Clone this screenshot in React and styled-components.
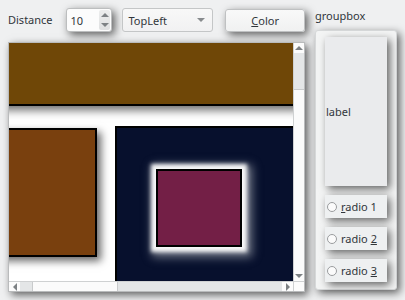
import styled, { createGlobalStyle } from 'styled-components';

const Global = createGlobalStyle`
  html, body {
    margin: 0;
    padding: 0;
    background: #eff0f1;
  }
  body {
    font-family: "Noto Sans", "DejaVu Sans", sans-serif;
    font-size: 11px;
    color: #31363b;
  }
`;

const shadow = '3px 3px 8px rgba(0,0,0,0.6)';

const Page = styled.div`
  display: flex;
  gap: 10px;
  padding: 8px 8px 0 8px;
  width: 405px;
  height: 300px;
  box-sizing: border-box;
  overflow: hidden;
`;
const LeftCol = styled.div`
  width: 297px;
  display: flex;
  flex-direction: column;
  gap: 10px;
`;
const Toolbar = styled.div`
  display: flex;
  align-items: center;
  height: 24px;
`;
const Caption = styled.span`
  margin-right: 13px;
  line-height: 24px;
`;
const Spin = styled.div`
  width: 47px;
  height: 24px;
  box-sizing: border-box;
  margin-right: 10px;
  background: #fcfcfc;
  border: 1px solid #bcbebf;
  border-radius: 3px;
  box-shadow: ${shadow};
  display: flex;
  align-items: center;
  justify-content: space-between;
  padding-left: 4px;
`;
const SpinArrows = styled.div`
  width: 11px;
  height: 20px;
  margin-right: 1px;
  border-radius: 2px;
  background: linear-gradient(#eceded, #dfe0e1);
  display: flex;
  flex-direction: column;
  align-items: center;
  justify-content: space-around;
`;
const Tri = styled.div`
  width: 0;
  height: 0;
  border-left: ${p => p.$size || 4}px solid transparent;
  border-right: ${p => p.$size || 4}px solid transparent;
  ${p => (p.$up ? 'border-bottom' : 'border-top')}: ${p => p.$size || 4}px solid ${p => p.$color || '#7d8184'};
`;
const SideTri = styled.div`
  width: 0;
  height: 0;
  border-top: 4px solid transparent;
  border-bottom: 4px solid transparent;
  ${p => (p.$left ? 'border-right' : 'border-left')}: 4px solid #7d8184;
`;
const Combo = styled.div`
  width: 91px;
  height: 24px;
  box-sizing: border-box;
  margin-right: 12px;
  background: linear-gradient(#f8f8f8, #f1f1f2);
  border: 1px solid #c4c6c7;
  border-radius: 3px;
  display: flex;
  align-items: center;
  justify-content: space-between;
  padding: 0 7px 0 5px;
`;
const Button = styled.div`
  width: 80px;
  height: 23px;
  box-sizing: border-box;
  background: linear-gradient(#f9f9f9, #f0f1f1);
  border: 1px solid #bfc1c2;
  border-radius: 3px;
  box-shadow: ${shadow};
  display: flex;
  align-items: center;
  justify-content: center;
`;
const U = styled.span`
  text-decoration: underline;
`;
const ScrollArea = styled.div`
  height: 250px;
  box-sizing: border-box;
  border: 1px solid #b9bbbc;
  background: #fff;
  box-shadow: ${shadow};
  display: grid;
  grid-template-columns: 1fr 11px;
  grid-template-rows: 1fr 10px;
`;
const Viewport = styled.div`
  position: relative;
  overflow: hidden;
  background: #fff;
`;
const Item = styled.div`
  position: absolute;
  box-sizing: border-box;
  border: 2px solid #000;
  background: ${p => p.$bg};
`;
const TopBar = styled(Item)`
  left: -20px;
  top: -20px;
  width: 340px;
  height: 83px;
  box-shadow: 3px 4px 9px rgba(0,0,0,0.6);
`;
const LeftBox = styled(Item)`
  left: -20px;
  top: 85px;
  width: 108px;
  height: 129px;
  box-shadow: 4px 4px 8px rgba(0,0,0,0.6);
`;
const NavyBox = styled(Item)`
  left: 106px;
  top: 83px;
  width: 220px;
  height: 200px;
`;
const InnerBox = styled(Item)`
  left: 147px;
  top: 126px;
  width: 86px;
  height: 78px;
  box-shadow: 0 0 4px 5px rgba(255,255,255,0.95), 3px 3px 9px 7px rgba(150,155,165,0.75);
`;
const VBar = styled.div`
  border-left: 1px solid #cfd1d2;
  background: #fff;
  display: flex;
  flex-direction: column;
`;
const HBar = styled.div`
  border-top: 1px solid #cfd1d2;
  display: flex;
`;
const ArrowCell = styled.div`
  flex: 0 0 ${p => p.$size}px;
  display: flex;
  align-items: center;
  justify-content: center;
  background: #fcfcfc;
`;
const Track = styled.div`
  flex: ${p => (p.$grow ? 1 : `0 0 ${p.$size}px`)};
  background: ${p => (p.$light ? '#fbfbfb' : '#e4e6e7')};
  ${p => p.$edge}: 1px solid #c9cbcc;
`;
const Corner = styled.div`
  background: #fcfcfc;
  border-left: 1px solid #cfd1d2;
  border-top: 1px solid #cfd1d2;
`;
const RightCol = styled.div`
  width: 82px;
  display: flex;
  flex-direction: column;
`;
const GroupTitle = styled.div`
  height: 22px;
  line-height: 16px;
`;
const GroupFrame = styled.div`
  height: 260px;
  box-sizing: border-box;
  border: 1px solid #d6d8d9;
  border-radius: 3px;
  background: #f3f4f4;
  box-shadow: ${shadow};
  padding: 6px 9px 7px 9px;
  display: flex;
  flex-direction: column;
  gap: 9px;
`;
const LabelBox = styled.div`
  flex: 1;
  background: #eaebed;
  box-shadow: ${shadow};
  display: flex;
  align-items: center;
  padding-left: 1px;
`;
const Radio = styled.div`
  height: 23px;
  background: #eef0f1;
  box-shadow: ${shadow};
  display: flex;
  align-items: center;
  gap: 4px;
  padding-left: 2px;
`;
const Circle = styled.span`
  width: 10px;
  height: 10px;
  box-sizing: border-box;
  border: 1px solid #9a9c9e;
  border-radius: 50%;
  background: #fbfbfb;
`;

const RadioItem = ({ pre, u, post }) => (
  <Radio>
    <Circle />
    <span>{pre}<U>{u}</U>{post}</span>
  </Radio>
);

export default function App() {
  return (
    <>
      <Global />
      <Page>
        <LeftCol>
          <Toolbar>
            <Caption>Distance</Caption>
            <Spin>
              <span>10</span>
              <SpinArrows>
                <Tri $up $size={4} />
                <Tri $size={4} />
              </SpinArrows>
            </Spin>
            <Combo>
              <span>TopLeft</span>
              <Tri $size={4} $color="#888b8e" />
            </Combo>
            <Button><span><U>C</U>olor</span></Button>
          </Toolbar>
          <ScrollArea>
            <Viewport>
              <TopBar $bg="#6f4707" />
              <LeftBox $bg="#79400e" />
              <NavyBox $bg="#07102d" />
              <InnerBox $bg="#731f46" />
            </Viewport>
            <VBar>
              <ArrowCell $size={10}><Tri $up /></ArrowCell>
              <Track $size={36} $edge="border-bottom" />
              <Track $grow $light />
              <ArrowCell $size={10}><Tri /></ArrowCell>
            </VBar>
            <HBar>
              <ArrowCell $size={11}><SideTri $left /></ArrowCell>
              <Track $size={12} $edge="border-right" />
              <Track $size={84} $light $edge="border-right" />
              <Track $grow />
              <ArrowCell $size={11}><SideTri /></ArrowCell>
            </HBar>
            <Corner />
          </ScrollArea>
        </LeftCol>
        <RightCol>
          <GroupTitle>groupbox</GroupTitle>
          <GroupFrame>
            <LabelBox>label</LabelBox>
            <RadioItem pre="" u="r" post="adio 1" />
            <RadioItem pre="radio " u="2" post="" />
            <RadioItem pre="radio " u="3" post="" />
          </GroupFrame>
        </RightCol>
      </Page>
    </>
  );
}
